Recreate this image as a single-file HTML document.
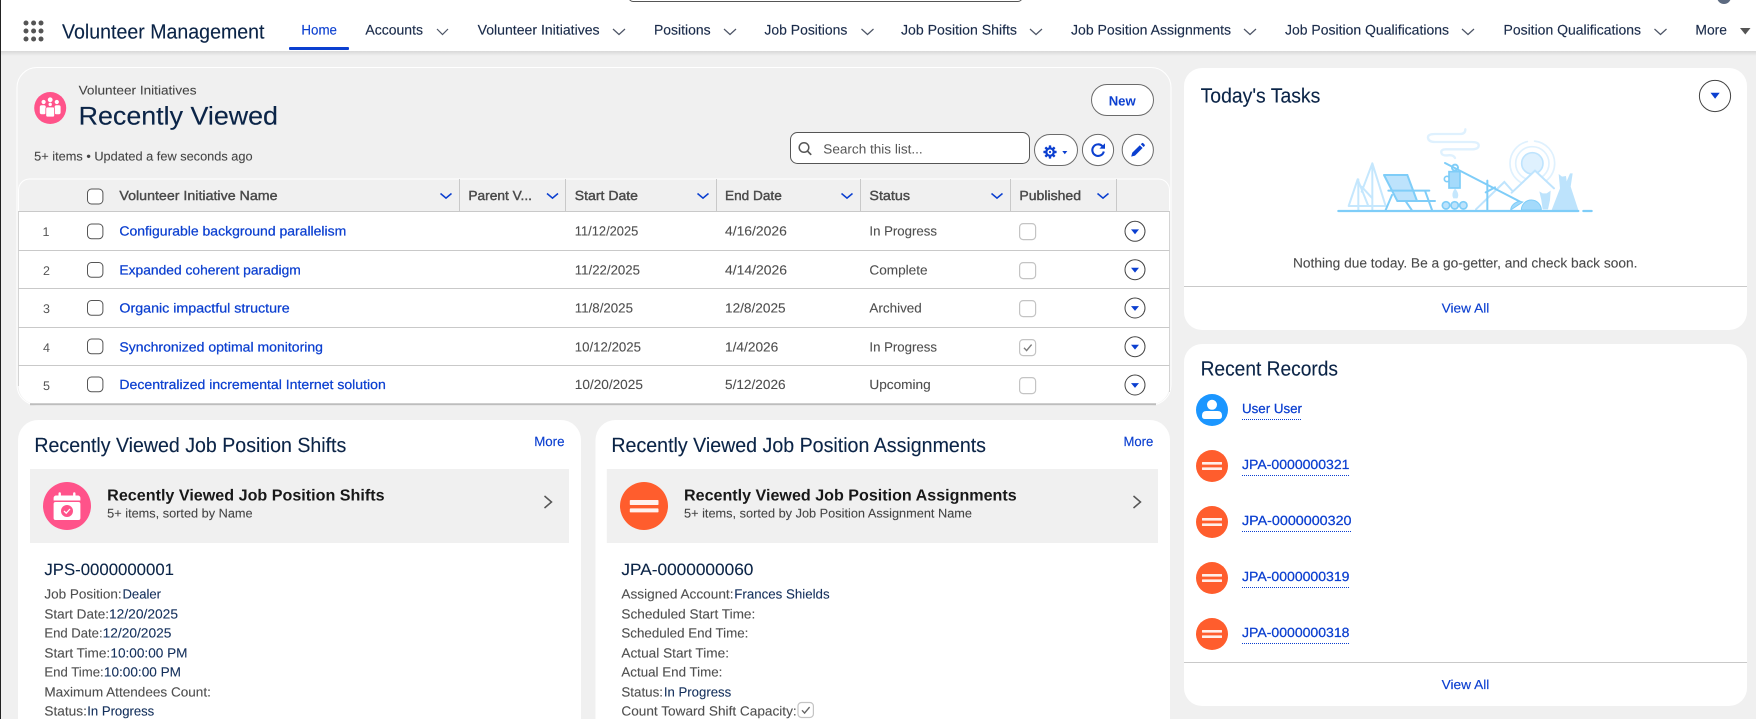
<!DOCTYPE html>
<html lang="en"><head><meta charset="utf-8"><title>Volunteer Management</title>
<style>
html,body{margin:0;padding:0;background:#f0f0f0;width:1756px;height:719px;overflow:hidden}
svg{display:block}
text{font-family:"Liberation Sans",sans-serif;text-rendering:geometricPrecision;white-space:pre}
.nav{font-size:13.8px;fill:#1a2b4a;stroke:#1a2b4a;stroke-width:.15}
.blue{fill:#0b3fd0;stroke:#0b3fd0;stroke-width:.15}
.th{font-size:13.2px;fill:#4a4a4a;stroke:#4a4a4a;stroke-width:.4}
.td{font-size:13.2px;fill:#4f4f4f;stroke:#4f4f4f;stroke-width:.1}
.lnk{font-size:13.2px;fill:#0b3fd0;stroke:#0b3fd0;stroke-width:.25}
.nm{font-size:12.5px;fill:#555}
.ct{font-size:20.5px;fill:#0b2447;stroke:#0b2447;stroke-width:.12}
.sm{font-size:12.6px;fill:#444;stroke:#444;stroke-width:.08}
.bt{font-size:16px;font-weight:700;fill:#181818}
.id{font-size:16.4px;fill:#0b2447;stroke:#0b2447;stroke-width:.1}
.k{font-size:13.2px;fill:#4f4f4f;stroke:#4f4f4f;stroke-width:.1}
.v{font-size:13.2px;fill:#14305c;stroke:#14305c;stroke-width:.1}
.va{fill:none;stroke:#4d5566;stroke-width:1.2}
.hc{fill:none;stroke:#0b3fd0;stroke-width:1.5}
.cb{fill:#fff;stroke:#555;stroke-width:1}
.pb{fill:#fff;stroke:#c4c4c4;stroke-width:1.2}
.ln{stroke:#c9c9c9;stroke-width:1}
.sp{stroke:#c9c9c9;stroke-width:1}
.ud{stroke:#0b3fd0;stroke-width:1;stroke-dasharray:1 1}
</style></head>
<body>
<svg width="1756" height="719" viewBox="0 0 1756 719" xmlns="http://www.w3.org/2000/svg">
<defs>
<linearGradient id="sh" x1="0" y1="0" x2="0" y2="1"><stop offset="0" stop-color="#d8d8d8"/><stop offset="1" stop-color="#f0f0f0"/></linearGradient>
<g id="act"><circle r="10" fill="#fff" stroke="#444" stroke-width="1"/><path d="M-4-1.9H4L0 2.9Z" fill="#0b3fd0"/></g>
<g id="jpa"><circle r="16" fill="#ff5d2d"/><rect x="-10" y="-4" width="20" height="2.6" rx=".5" fill="#fff" opacity=".9"/><rect x="-10" y="1.4" width="20" height="2.6" rx=".5" fill="#fff" opacity=".9"/></g>
</defs>
<rect width="1756" height="719" fill="#f0f0f0"/>

<!-- nav -->
<rect y="51" width="1756" height="5" fill="url(#sh)"/>
<rect width="1756" height="51" fill="#fff"/>
<rect x="629" y="-20" width="393" height="21.5" rx="4" fill="#fff" stroke="#555" stroke-width="1"/>
<circle cx="1724" cy="-3" r="7" fill="#5c6a80"/>
<g fill="#555"><circle cx="26" cy="23" r="2.5"/><circle cx="33.6" cy="23" r="2.5"/><circle cx="41" cy="23" r="2.5"/><circle cx="26" cy="31" r="2.5"/><circle cx="33.6" cy="31" r="2.5"/><circle cx="41" cy="31" r="2.5"/><circle cx="26" cy="39" r="2.5"/><circle cx="33.6" cy="39" r="2.5"/><circle cx="41" cy="39" r="2.5"/></g>
<text x="62" y="38.5" font-size="20.5" fill="#0b2447" stroke="#0b2447" stroke-width=".12" textLength="202.5" lengthAdjust="spacingAndGlyphs">Volunteer Management</text>
<text x="301.4" y="34.7" class="nav blue" textLength="35.6" lengthAdjust="spacingAndGlyphs">Home</text>
<rect x="289" y="47" width="60" height="3" rx="1" fill="#0b3fd0"/>
<text x="365.4" y="34.7" class="nav" textLength="57.6" lengthAdjust="spacingAndGlyphs">Accounts</text>
<text x="477.6" y="34.7" class="nav" textLength="122" lengthAdjust="spacingAndGlyphs">Volunteer Initiatives</text>
<text x="654" y="34.7" class="nav" textLength="56.6" lengthAdjust="spacingAndGlyphs">Positions</text>
<text x="764.4" y="34.7" class="nav" textLength="83" lengthAdjust="spacingAndGlyphs">Job Positions</text>
<text x="901" y="34.7" class="nav" textLength="116" lengthAdjust="spacingAndGlyphs">Job Position Shifts</text>
<text x="1071" y="34.7" class="nav" textLength="160" lengthAdjust="spacingAndGlyphs">Job Position Assignments</text>
<text x="1285" y="34.7" class="nav" textLength="164" lengthAdjust="spacingAndGlyphs">Job Position Qualifications</text>
<text x="1503.5" y="34.7" class="nav" textLength="137.5" lengthAdjust="spacingAndGlyphs">Position Qualifications</text>
<text x="1695.4" y="34.7" class="nav" textLength="31.6" lengthAdjust="spacingAndGlyphs">More</text>
<g class="va"><path d="M437 29l5.5 5.5 5.5-5.5"/><path d="M613 29l6 5.5 6-5.5"/><path d="M724 29l6 5.5 6-5.5"/><path d="M861.5 29l6 5.5 6-5.5"/><path d="M1030 29l6 5.5 6-5.5"/><path d="M1244 29l6 5.5 6-5.5"/><path d="M1462 29l6 5.5 6-5.5"/><path d="M1654.5 29l6 5.5 6-5.5"/></g>
<path d="M1740 28h10.5l-5.2 6.5Z" fill="#555"/>
<rect x="0" y="0" width="1" height="719" fill="#222"/>

<!-- list panel -->
<rect x="17" y="67.5" width="1154" height="337.5" rx="20" fill="#f0f0f0" stroke="#fff" stroke-width="1"/>
<circle cx="50.2" cy="108" r="16" fill="#ff538a"/>
<g fill="#fff"><circle cx="43.6" cy="102" r="2.1"/><circle cx="50.2" cy="99.8" r="2.4"/><circle cx="56.8" cy="102" r="2.1"/><rect x="39.8" y="105.2" width="6" height="9" rx="1.8"/><rect x="54.6" y="105.2" width="6" height="9" rx="1.8"/><circle cx="50.2" cy="104.4" r="1.7"/><rect x="45.8" y="107" width="8.8" height="10" rx="1.8" stroke="#ff538a" stroke-width=".8"/></g>
<text x="78.6" y="94.3" class="sm" textLength="117.9" lengthAdjust="spacingAndGlyphs">Volunteer Initiatives</text>
<text x="78.6" y="124.3" font-size="25.5" fill="#0b2447" stroke="#0b2447" stroke-width=".15" textLength="199.4" lengthAdjust="spacingAndGlyphs">Recently Viewed</text>
<text x="34.2" y="160.7" class="sm" textLength="218.4" lengthAdjust="spacingAndGlyphs">5+ items • Updated a few seconds ago</text>

<rect x="1091.5" y="84.5" width="62" height="31" rx="15.5" fill="#fff" stroke="#6b6b6b"/>
<text x="1108.7" y="105.3" font-size="13.5" font-weight="700" fill="#0b3fd0" textLength="27" lengthAdjust="spacingAndGlyphs">New</text>
<rect x="790.5" y="132.5" width="239" height="31" rx="7" fill="#fff" stroke="#555"/>
<circle cx="804" cy="147.5" r="4.8" fill="none" stroke="#555" stroke-width="1.5"/><path d="M807.6 151.2L811.2 154.8" stroke="#555" stroke-width="1.7"/>
<text x="823.3" y="153.3" font-size="13.2" fill="#555" textLength="99.4" lengthAdjust="spacingAndGlyphs">Search this list...</text>
<rect x="1034.5" y="134.5" width="43" height="31" rx="15.5" fill="#fff" stroke="#6b6b6b"/>
<g transform="translate(1050 152)" fill="#0b3fd0"><circle r="4.8" fill="#0b3fd0"/><rect x="-1.2" y="-6.6" width="2.4" height="13.2" rx=".4"/><rect x="-1.2" y="-6.6" width="2.4" height="13.2" rx=".4" transform="rotate(45)"/><rect x="-1.2" y="-6.6" width="2.4" height="13.2" rx=".4" transform="rotate(90)"/><rect x="-1.2" y="-6.6" width="2.4" height="13.2" rx=".4" transform="rotate(135)"/><circle r="2.6" fill="#fff"/><circle r="1.1" fill="#0b3fd0"/></g>
<path d="M1062.3 151h5l-2.5 3.2Z" fill="#0b3fd0"/>
<circle cx="1098" cy="150" r="15.6" fill="#fff" stroke="#6b6b6b"/>
<path d="M1102.4 146.2A5.8 5.8 0 1 0 1103.8 151.5" fill="none" stroke="#0b3fd0" stroke-width="2.1"/><path d="M1099.4 148.6L1105 148.8L1105 143.2Z" fill="#0b3fd0"/>
<circle cx="1137.8" cy="150" r="15.6" fill="#fff" stroke="#6b6b6b"/>
<path d="M1132.2 152.8L1139.8 145.2L1142.6 148L1135 155.6L1131.2 156.6ZM1140.8 144.2L1141.8 143.2Q1142.6 142.6 1143.3 143.3L1144.5 144.5Q1145.2 145.2 1144.6 146L1143.6 147Z" fill="#0b3fd0"/>

<!-- table -->
<path d="M18.5 190a11 11 0 0 1 11-11H1158.5a11 11 0 0 1 11 11V211.5H18.5Z" fill="#f0f0f0" stroke="#fff"/>
<path d="M18.5 211.5H1169.5V386a18 18 0 0 1-18 18H36.5a18 18 0 0 1-18-18Z" fill="#fff"/>
<path d="M18.5 211V386M1169.5 211V392" stroke="#d4d4d4"/>
<path d="M30 404.2H1156" stroke="#bdbdbd" stroke-width="2"/>
<g class="ln"><path d="M18.5 211.5H1169.5M18.5 250.5H1169.5M18.5 288.5H1169.5M18.5 327.5H1169.5M18.5 365.5H1169.5"/></g>
<g class="sp"><path d="M459.5 179V211M565.5 179V211M716.5 179V211M860.5 179V211M1010.5 179V211M1116.5 179V211"/></g>
<rect x="87.5" y="189" width="15.4" height="15" rx="4" class="cb"/>
<text x="119.4" y="200" class="th" textLength="158.1" lengthAdjust="spacingAndGlyphs">Volunteer Initiative Name</text>
<text x="468.4" y="200" class="th" textLength="63.6" lengthAdjust="spacingAndGlyphs">Parent V...</text>
<text x="574.8" y="200" class="th" textLength="63.2" lengthAdjust="spacingAndGlyphs">Start Date</text>
<text x="725" y="200" class="th" textLength="56.8" lengthAdjust="spacingAndGlyphs">End Date</text>
<text x="869.4" y="200" class="th" textLength="40.6" lengthAdjust="spacingAndGlyphs">Status</text>
<text x="1019.4" y="200" class="th" textLength="61.6" lengthAdjust="spacingAndGlyphs">Published</text>
<g class="hc"><path d="M440.5 193.5l5.5 4.6 5.5-4.6"/><path d="M547 193.5l5.5 4.6 5.5-4.6"/><path d="M697.5 193.5l5.5 4.6 5.5-4.6"/><path d="M841.5 193.5l5.5 4.6 5.5-4.6"/><path d="M991.5 193.5l5.5 4.6 5.5-4.6"/><path d="M1097.5 193.5l5.5 4.6 5.5-4.6"/></g>

<g text-anchor="middle"><text x="46" y="236" class="nm">1</text><text x="46.5" y="275" class="nm">2</text><text x="46.5" y="313" class="nm">3</text><text x="46.5" y="352" class="nm">4</text><text x="46.5" y="390" class="nm">5</text></g>
<rect x="87.5" y="224" width="15.4" height="14.8" rx="4" class="cb"/><rect x="87.5" y="262.5" width="15.4" height="14.8" rx="4" class="cb"/><rect x="87.5" y="300.5" width="15.4" height="14.8" rx="4" class="cb"/><rect x="87.5" y="339" width="15.4" height="14.8" rx="4" class="cb"/><rect x="87.5" y="377" width="15.4" height="14.8" rx="4" class="cb"/>
<text x="119.4" y="235.3" class="lnk" textLength="226.9" lengthAdjust="spacingAndGlyphs">Configurable background parallelism</text>
<text x="119.4" y="274.3" class="lnk" textLength="181.4" lengthAdjust="spacingAndGlyphs">Expanded coherent paradigm</text>
<text x="119.4" y="312.3" class="lnk" textLength="170.3" lengthAdjust="spacingAndGlyphs">Organic impactful structure</text>
<text x="119.4" y="351.3" class="lnk" textLength="203.6" lengthAdjust="spacingAndGlyphs">Synchronized optimal monitoring</text>
<text x="119.4" y="389" class="lnk" textLength="266.4" lengthAdjust="spacingAndGlyphs">Decentralized incremental Internet solution</text>
<text x="574.8" y="235.3" class="td" textLength="63.5" lengthAdjust="spacingAndGlyphs">11/12/2025</text>
<text x="574.8" y="274.3" class="td" textLength="65.2" lengthAdjust="spacingAndGlyphs">11/22/2025</text>
<text x="574.8" y="312.3" class="td" textLength="58.2" lengthAdjust="spacingAndGlyphs">11/8/2025</text>
<text x="574.8" y="351.3" class="td" textLength="66.2" lengthAdjust="spacingAndGlyphs">10/12/2025</text>
<text x="574.8" y="389" class="td" textLength="68.1" lengthAdjust="spacingAndGlyphs">10/20/2025</text>
<text x="725" y="235.3" class="td" textLength="61.8" lengthAdjust="spacingAndGlyphs">4/16/2026</text>
<text x="725" y="274.3" class="td" textLength="62" lengthAdjust="spacingAndGlyphs">4/14/2026</text>
<text x="725" y="312.3" class="td" textLength="60.6" lengthAdjust="spacingAndGlyphs">12/8/2025</text>
<text x="725" y="351.3" class="td" textLength="53.3" lengthAdjust="spacingAndGlyphs">1/4/2026</text>
<text x="725" y="389" class="td" textLength="60.6" lengthAdjust="spacingAndGlyphs">5/12/2026</text>
<text x="869.4" y="235.3" class="td" textLength="67.6" lengthAdjust="spacingAndGlyphs">In Progress</text>
<text x="869.4" y="274.3" class="td" textLength="58.2" lengthAdjust="spacingAndGlyphs">Complete</text>
<text x="869.4" y="312.3" class="td" textLength="52.4" lengthAdjust="spacingAndGlyphs">Archived</text>
<text x="869.4" y="351.3" class="td" textLength="67.6" lengthAdjust="spacingAndGlyphs">In Progress</text>
<text x="869.4" y="389" class="td" textLength="61.3" lengthAdjust="spacingAndGlyphs">Upcoming</text>
<rect x="1019.6" y="223.6" width="16" height="16" rx="3.5" class="pb"/><rect x="1019.6" y="262.6" width="16" height="16" rx="3.5" class="pb"/><rect x="1019.6" y="300.6" width="16" height="16" rx="3.5" class="pb"/><rect x="1019.6" y="339.6" width="16" height="16" rx="3.5" class="pb"/><rect x="1019.6" y="377.6" width="16" height="16" rx="3.5" class="pb"/>
<path d="M1024 347.8l2.6 2.8 5-6" fill="none" stroke="#7a7a7a" stroke-width="1.4"/>
<use href="#act" x="1135" y="231.3"/><use href="#act" x="1135" y="269.7"/><use href="#act" x="1135" y="308"/><use href="#act" x="1135" y="346.7"/><use href="#act" x="1135" y="385"/>

<!-- shifts card -->
<path d="M18 719V440a20 20 0 0 1 20-20H561a20 20 0 0 1 20 20V719Z" fill="#fff"/>
<text x="34.4" y="452" class="ct" textLength="311.9" lengthAdjust="spacingAndGlyphs">Recently Viewed Job Position Shifts</text>
<text x="534.2" y="446" font-size="13.4" class="blue" textLength="30.3" lengthAdjust="spacingAndGlyphs">More</text>
<rect x="30" y="469" width="539" height="74" fill="#f0f0f0"/>
<circle cx="67" cy="506" r="24" fill="#ff538a"/>
<path d="M53.6 500.5v-2.5a2.5 2.5 0 0 1 2.5-2.5h2.4v-2a1 1 0 0 1 2.4 0v2h12.2v-2a1 1 0 0 1 2.4 0v2h2.4a2.5 2.5 0 0 1 2.5 2.5v2.5Z" fill="#fff"/>
<rect x="53.6" y="502" width="26.8" height="18" rx="2" fill="#fff"/>
<circle cx="67" cy="511" r="6" fill="#ff538a"/><path d="M64 511l2.2 2.2 3.8-4.2" fill="none" stroke="#fff" stroke-width="1.3"/>
<text x="107.2" y="500.3" class="bt" textLength="277.4" lengthAdjust="spacingAndGlyphs">Recently Viewed Job Position Shifts</text>
<text x="107.2" y="517.7" class="sm" textLength="145.4" lengthAdjust="spacingAndGlyphs">5+ items, sorted by Name</text>
<path d="M544.5 496l7 6-7 6" fill="none" stroke="#555" stroke-width="1.5"/>
<text x="44.4" y="575" class="id" textLength="129.6" lengthAdjust="spacingAndGlyphs">JPS-0000000001</text>
<text x="44.4" y="598.3" class="k" textLength="77.3" lengthAdjust="spacingAndGlyphs">Job Position:</text><text x="122.5" y="598.3" class="v" textLength="38.5" lengthAdjust="spacingAndGlyphs">Dealer</text>
<text x="44.4" y="618.3" class="k" textLength="64.6" lengthAdjust="spacingAndGlyphs">Start Date:</text><text x="109" y="618.3" class="v" textLength="69" lengthAdjust="spacingAndGlyphs">12/20/2025</text>
<text x="44.4" y="637.3" class="k" textLength="58.2" lengthAdjust="spacingAndGlyphs">End Date:</text><text x="102.6" y="637.3" class="v" textLength="68.8" lengthAdjust="spacingAndGlyphs">12/20/2025</text>
<text x="44.4" y="657.3" class="k" textLength="65.8" lengthAdjust="spacingAndGlyphs">Start Time:</text><text x="110.4" y="657.3" class="v" textLength="77.1" lengthAdjust="spacingAndGlyphs">10:00:00 PM</text>
<text x="44.4" y="676.3" class="k" textLength="59.3" lengthAdjust="spacingAndGlyphs">End Time:</text><text x="103.9" y="676.3" class="v" textLength="77.1" lengthAdjust="spacingAndGlyphs">10:00:00 PM</text>
<text x="44.4" y="696.3" class="k" textLength="166.5" lengthAdjust="spacingAndGlyphs">Maximum Attendees Count:</text>
<text x="44.4" y="715.3" class="k" textLength="42.5" lengthAdjust="spacingAndGlyphs">Status:</text><text x="87.3" y="715.3" class="v" textLength="66.9" lengthAdjust="spacingAndGlyphs">In Progress</text>

<!-- assignments card -->
<path d="M595.5 719V440a20 20 0 0 1 20-20H1150a20 20 0 0 1 20 20V719Z" fill="#fff"/>
<text x="611.4" y="452" class="ct" textLength="374.6" lengthAdjust="spacingAndGlyphs">Recently Viewed Job Position Assignments</text>
<text x="1123.5" y="446" font-size="13.4" class="blue" textLength="29.8" lengthAdjust="spacingAndGlyphs">More</text>
<rect x="606.8" y="469" width="551.2" height="74" fill="#f0f0f0"/>
<circle cx="644" cy="506" r="24" fill="#ff5d2d"/>
<rect x="629.8" y="500" width="28.7" height="5" rx=".8" fill="#fff" opacity=".92"/><rect x="629.8" y="508.4" width="28.7" height="4" rx=".8" fill="#fff" opacity=".92"/>
<text x="684" y="500.3" class="bt" textLength="332.7" lengthAdjust="spacingAndGlyphs">Recently Viewed Job Position Assignments</text>
<text x="684" y="517.7" class="sm" textLength="288" lengthAdjust="spacingAndGlyphs">5+ items, sorted by Job Position Assignment Name</text>
<path d="M1133.5 496l7 6-7 6" fill="none" stroke="#555" stroke-width="1.5"/>
<text x="621.4" y="575" class="id" textLength="132" lengthAdjust="spacingAndGlyphs">JPA-0000000060</text>
<text x="621.4" y="598.3" class="k" textLength="112.1" lengthAdjust="spacingAndGlyphs">Assigned Account:</text><text x="734.3" y="598.3" class="v" textLength="95.3" lengthAdjust="spacingAndGlyphs">Frances Shields</text>
<text x="621.4" y="618.3" class="k" textLength="133.9" lengthAdjust="spacingAndGlyphs">Scheduled Start Time:</text>
<text x="621.4" y="637.3" class="k" textLength="127" lengthAdjust="spacingAndGlyphs">Scheduled End Time:</text>
<text x="621.4" y="657.3" class="k" textLength="107.6" lengthAdjust="spacingAndGlyphs">Actual Start Time:</text>
<text x="621.4" y="676.3" class="k" textLength="101" lengthAdjust="spacingAndGlyphs">Actual End Time:</text>
<text x="621.4" y="696.3" class="k" textLength="41.6" lengthAdjust="spacingAndGlyphs">Status:</text><text x="663.9" y="696.3" class="v" textLength="67.3" lengthAdjust="spacingAndGlyphs">In Progress</text>
<text x="621.4" y="715.3" class="k" textLength="175.3" lengthAdjust="spacingAndGlyphs">Count Toward Shift Capacity:</text>
<rect x="798" y="702.5" width="15.4" height="15" rx="3.5" class="pb"/><path d="M802 710.3l2.6 2.8 5-6" fill="none" stroke="#666" stroke-width="1.4"/>

<!-- today's tasks -->
<rect x="1184" y="68" width="563" height="262" rx="18" fill="#fff"/>
<text x="1200.6" y="102.7" class="ct" textLength="119.7" lengthAdjust="spacingAndGlyphs">Today's Tasks</text>
<circle cx="1715" cy="96" r="15.6" fill="#fff" stroke="#444"/>
<path d="M1710.5 92.7h9.2l-4.6 6Z" fill="#0b3fd0"/>
<g transform="translate(1320 120) scale(.33333)" fill="none" stroke-linecap="round">
 <path d="M436 28Q436 42 420 42H345Q322 42 324 54Q326 66 345 66H455Q478 66 476 78Q474 88 455 88H378Q362 88 364 98Q366 108 384 106Q400 104 405 114" stroke="#dff1fe" stroke-width="7"/>
 <circle cx="637" cy="130" r="67" stroke="#dff1fe" stroke-width="5" stroke-dasharray="300 22 100 0"/>
 <circle cx="637" cy="130" r="50" stroke="#dff1fe" stroke-width="5"/>
 <circle cx="637" cy="130" r="32" fill="#dff1fe" stroke="#bfe4fd" stroke-width="5"/>
 <path d="M468 268L553 186L580 216" stroke="#bfe4fd" stroke-width="6"/>
 <path d="M575 218L645 152L702 205V270H590Z" fill="#fff"/>
 <path d="M575 218L645 152L702 205" stroke="#bfe4fd" stroke-width="6"/>
 <path d="M86 258L113 178L145 258ZM125 215L157 130L197 258H86M115 178V270M157 130V270M125 200L157 235" stroke="#c5e7fd" stroke-width="6" stroke-linejoin="round"/>
 <path d="M192 165H262L290 240H232Z" fill="#bde3fc"/>
 <path d="M192 165H262L290 240M192 165L232 243H345M205 212H328M216 225L197 270M258 245L275 270M315 212L336 270" stroke="#7fcdf8" stroke-width="6"/>
 <path d="M405 205Q392 222 400 235H412Q420 222 405 205Z" fill="#c5e7fd"/>
 <g stroke="#7fcdf8" stroke-width="5" fill="#bde3fc"><circle cx="378" cy="256" r="11"/><circle cx="404" cy="256" r="11"/><circle cx="430" cy="256" r="11"/></g>
 <circle cx="405" cy="143" r="9" stroke="#7fcdf8" stroke-width="6"/>
 <circle cx="381" cy="177" r="8" stroke="#7fcdf8" stroke-width="5"/>
 <rect x="387" y="155" width="33" height="49" fill="#a4dafb" stroke="#7fcdf8" stroke-width="5"/>
 <path d="M375 129L600 245M502 182V270M497 217L525 202" stroke="#7fcdf8" stroke-width="6"/>
 <path d="M572 270A28 28 0 0 1 608 246Z" fill="#a4dafb" stroke="#7fcdf8" stroke-width="3"/>
 <path d="M604 270A30 30 0 0 1 664 270Z" fill="#a4dafb" stroke="#7fcdf8" stroke-width="3"/>
 <path d="M668 268L664 240L658 214L668 220L680 220L692 212L690 240L684 268Z" fill="#bde3fc"/>
 <path d="M695 270L720 205L716 162L726 170L738 168L740 184L750 160L758 160L752 200L775 270Z" fill="#bde3fc"/>
 <path d="M55 273H775M790 273H815" stroke="#7fcdf8" stroke-width="6.5"/>
</g>
<text x="1293" y="267.3" font-size="13.4" fill="#4a4a4a" stroke="#4a4a4a" stroke-width=".1" textLength="344.4" lengthAdjust="spacingAndGlyphs">Nothing due today. Be a go-getter, and check back soon.</text>
<path d="M1184 286.5H1747" class="ln"/>
<text x="1441.6" y="312.7" font-size="13" class="blue" textLength="47.7" lengthAdjust="spacingAndGlyphs">View All</text>

<!-- recent records -->
<rect x="1184" y="344" width="563" height="362" rx="18" fill="#fff"/>
<text x="1200.6" y="375.7" class="ct" textLength="137.4" lengthAdjust="spacingAndGlyphs">Recent Records</text>
<circle cx="1212" cy="410" r="16" fill="#1b96ff"/>
<circle cx="1212" cy="404.8" r="5" fill="#fff"/><path d="M1202 415.5Q1202 411 1206.5 411H1217.5Q1222 411 1222 415.5V416Q1222 419 1219 419H1205Q1202 419 1202 416Z" fill="#fff"/>
<text x="1242" y="413" class="lnk" textLength="60" lengthAdjust="spacingAndGlyphs">User User</text>
<path d="M1242 419.5H1302" class="ud"/>
<use href="#jpa" x="1212" y="466"/>
<text x="1242" y="469" class="lnk" textLength="107.5" lengthAdjust="spacingAndGlyphs">JPA-0000000321</text>
<path d="M1242 475.5H1350" class="ud"/>
<use href="#jpa" x="1212" y="522"/>
<text x="1242" y="525" class="lnk" textLength="109.5" lengthAdjust="spacingAndGlyphs">JPA-0000000320</text>
<path d="M1242 531.5H1352" class="ud"/>
<use href="#jpa" x="1212" y="578"/>
<text x="1242" y="581" class="lnk" textLength="107.5" lengthAdjust="spacingAndGlyphs">JPA-0000000319</text>
<path d="M1242 587.5H1350" class="ud"/>
<use href="#jpa" x="1212" y="634"/>
<text x="1242" y="637" class="lnk" textLength="107.5" lengthAdjust="spacingAndGlyphs">JPA-0000000318</text>
<path d="M1242 643.5H1350" class="ud"/>
<path d="M1184 662.5H1747" class="ln"/>
<text x="1441.6" y="689" font-size="13" class="blue" textLength="47.7" lengthAdjust="spacingAndGlyphs">View All</text>
</svg>
</body></html>
